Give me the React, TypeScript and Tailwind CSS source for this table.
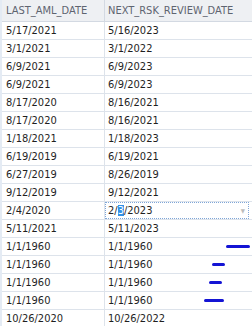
import React from 'react';

const rows: [string, string][] = [
  ['5/17/2021', '5/16/2023'],
  ['3/1/2021', '3/1/2022'],
  ['6/9/2021', '6/9/2023'],
  ['6/9/2021', '6/9/2023'],
  ['8/17/2020', '8/16/2021'],
  ['8/17/2020', '8/16/2021'],
  ['1/18/2021', '1/18/2023'],
  ['6/19/2019', '6/19/2021'],
  ['6/27/2019', '8/26/2019'],
  ['9/12/2019', '9/12/2021'],
  ['2/4/2020', '2/3/2023'],
  ['5/11/2021', '5/11/2023'],
  ['1/1/1960', '1/1/1960'],
  ['1/1/1960', '1/1/1960'],
  ['1/1/1960', '1/1/1960'],
  ['1/1/1960', '1/1/1960'],
  ['10/26/2020', '10/26/2022'],
];

// hand-drawn pen marks over the 1/1/1960 rows
const marks = [
  { left: 'left-[224px]', top: 'top-[245px]', w: 'w-[24px]' },
  { left: 'left-[210px]', top: 'top-[263px]', w: 'w-[13px]' },
  { left: 'left-[207px]', top: 'top-[281px]', w: 'w-[13px]' },
  { left: 'left-[202px]', top: 'top-[299px]', w: 'w-[20px]' },
];

function EditingCell() {
  return (
    <div className="relative flex h-full flex-1 items-center border border-dotted border-[#7fa6d8] pl-[2px] leading-[13px]">
      <span>2/</span>
      <span className="h-[11px] bg-[#3391e8] leading-[11px] text-white">3</span>
      <span>/2023</span>
      <span className="absolute right-[3px] top-[5px] text-[6px] leading-none text-[#bcbcbc]">▼</span>
    </div>
  );
}

export default function App() {
  return (
    <div className="relative h-[326px] w-[252px] overflow-hidden border-l-2 border-[#e4ebf4] bg-white font-['DejaVu_Sans_Condensed','Liberation_Sans',sans-serif] text-[11px]">
      <div className="flex h-[22px] border-b border-[#d3d9e2] bg-[#eef0f3] leading-[21px] text-[#5e6470]">
        <div className="w-[103px] border-r border-[#d3d9e2] pl-[4px]">LAST_AML_DATE</div>
        <div className="flex-1 pl-[3px]">NEXT_RSK_REVIEW_DATE</div>
      </div>
      {rows.map(([last, next], i) => (
        <div key={i} className="flex h-[18px] border-b border-[#dde3eb] leading-[17px] text-[#1f1f1f]">
          <div className="w-[103px] border-r border-[#dde3eb] pl-[4px]">{last}</div>
          {i === 10 ? (
            <div className="flex flex-1 pr-[3px]">
              <EditingCell />
            </div>
          ) : (
            <div className="flex-1 pl-[3px]">{next}</div>
          )}
        </div>
      ))}
      {marks.map((m, i) => (
        <span key={i} className={`absolute h-[3px] rounded-full bg-[#1414d4] ${m.left} ${m.top} ${m.w}`} />
      ))}
    </div>
  );
}
